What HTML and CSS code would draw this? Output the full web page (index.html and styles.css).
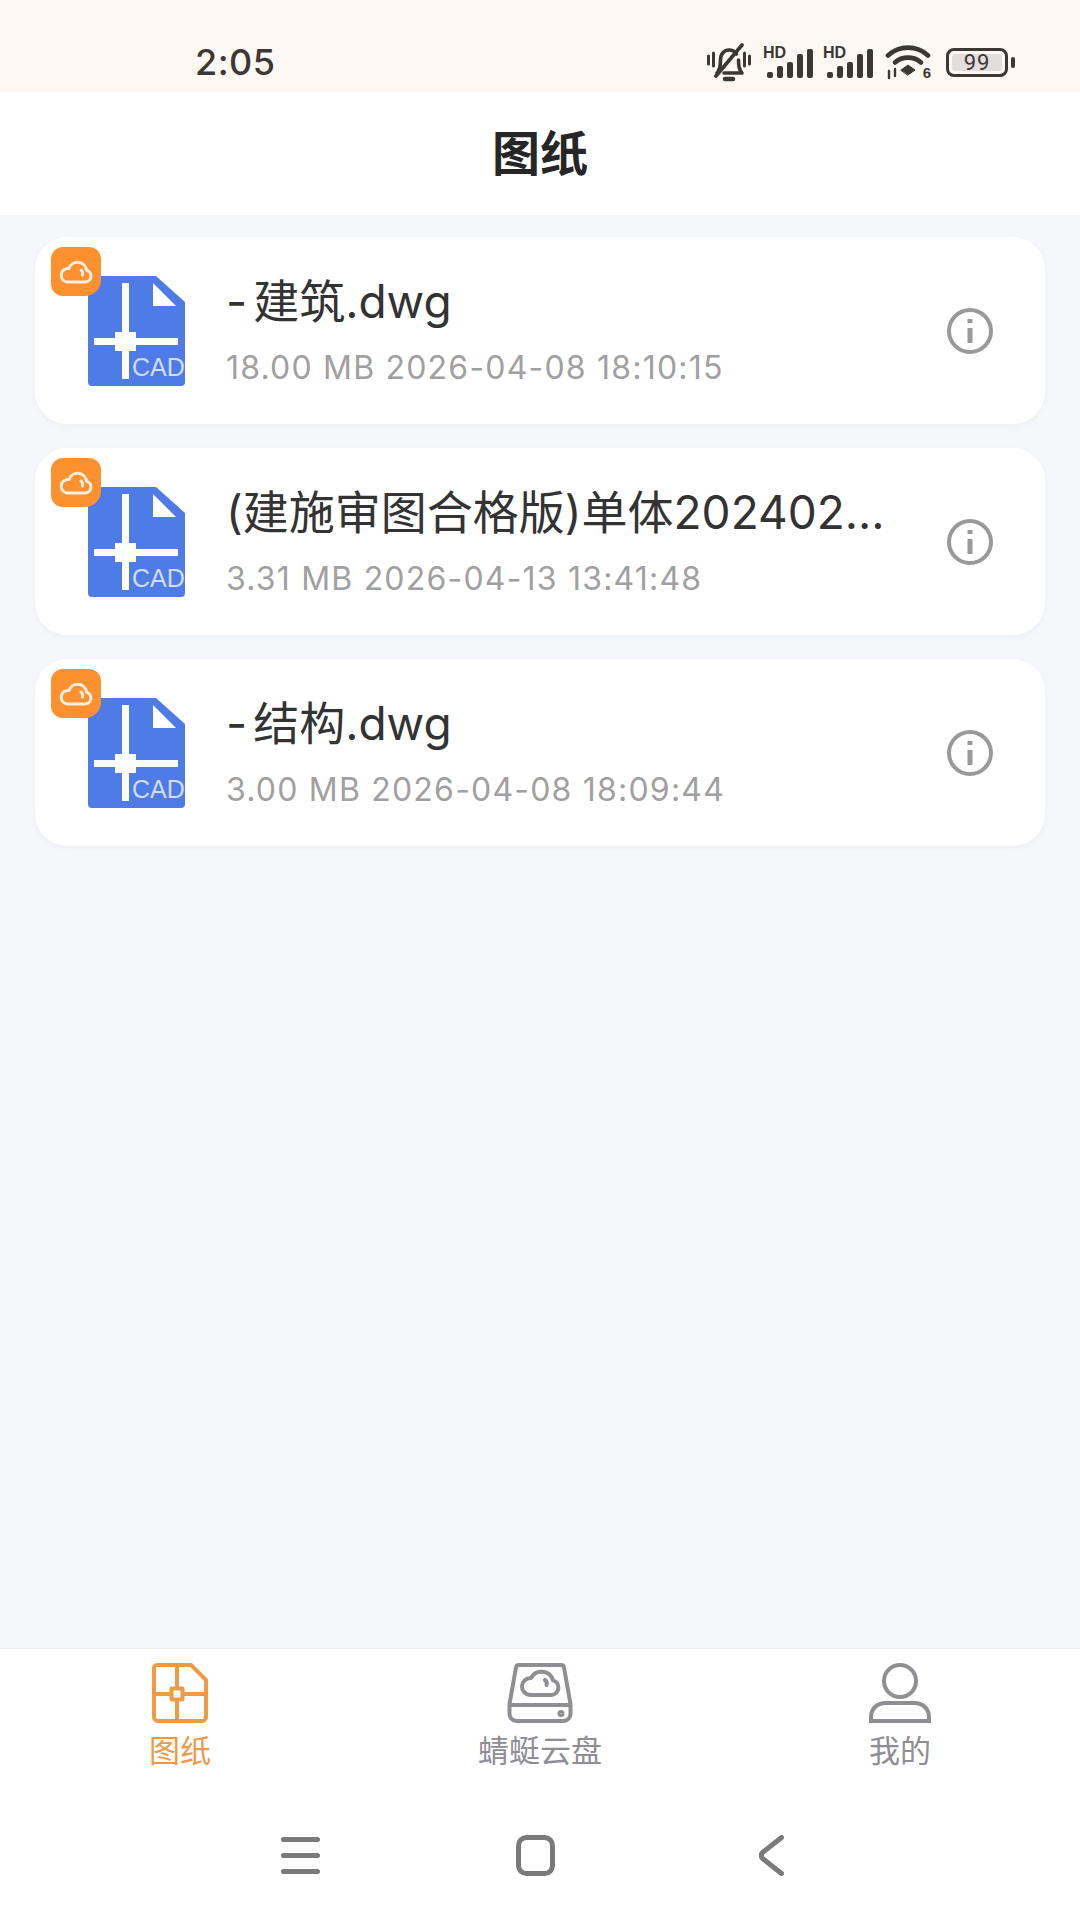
FILE: index.html
```html
<!DOCTYPE html>
<html lang="zh-CN">
<head>
  <meta charset="UTF-8" />
  <meta name="viewport" content="width=device-width, initial-scale=1.0"/>
  <title>图纸</title>
  <link rel="stylesheet" href="styles.css">
</head>
<body>
  <div class="status-bar">
    <span class="clock">2:05</span>
    <div class="status-icons">
      <svg class="ic-bell" viewBox="0 0 44 39" fill="none" stroke="#3d3733" stroke-width="3.6" stroke-linecap="round" stroke-linejoin="round">
        <path d="M1.5 13v8M6.500 10v13M42.500 13v8M37.500 10v13" stroke-width="3"/>
        <path d="M10 30c3-3 3.500-7 3.500-13 0-6 3.500-10 8.500-10 3.500 0 6 1.500 7.500 4M31.500 17c0 6 .5 10 3.500 13H17"/>
        <path d="M18 36h8" stroke-width="4.5"/>
        <path d="M9 33L35 2"/>
      </svg>
      <div class="signal">
        <span class="hd">HD</span>
        <div class="bars"><i class="b1"></i><i class="b2"></i><i class="b3"></i><i class="b4"></i><i class="b5"></i></div>
      </div>
      <div class="signal">
        <span class="hd">HD</span>
        <div class="bars"><i class="b1"></i><i class="b2"></i><i class="b3"></i><i class="b4"></i><i class="b5"></i></div>
      </div>
      <div class="wifi">
        <svg viewBox="0 0 46 36" fill="none" stroke="#3d3733" stroke-width="4.6" stroke-linecap="round">
          <path d="M3 11.500C14 1 32 1 43 11.500"/>
          <path d="M10 18.500C17 12 29 12 36 18.500"/>
          <path d="M16 26l7-5 7 5-7 5z" fill="#3d3733" stroke-width="1"/>
          <path d="M4 27v7M10 25v7" stroke-width="2.4"/>
        </svg>
        <span class="wifi-six">6</span>
      </div>
      <div class="battery">
        <div class="battery-body"><span class="battery-level">99</span></div>
        <i class="battery-tip"></i>
      </div>
    </div>
  </div>

  <header class="title-bar">图纸</header>

  <main class="file-list">
    <div class="file-card">
      <div class="file-icon">
        <span class="cloud-badge">
          <svg viewBox="0 0 34 24" fill="none" stroke="#fdeedd" stroke-width="3" stroke-linecap="round" stroke-linejoin="round"><path d="M8 22h18a6 6 0 0 0 1.500-11.800A9 9 0 0 0 10 8.500 6.800 6.800 0 0 0 8 22z"/><path d="M22 10c1.500 1 2 2.500 1.500 5"/></svg>
        </span>
        <svg class="cad" viewBox="0 0 97 110">
          <path d="M4 0h64l29 26v80a4 4 0 0 1-4 4H4a4 4 0 0 1-4-4V4a4 4 0 0 1 4-4z" fill="#4f7be6"/>
          <path d="M65 7l23 23H65z" fill="#fff"/>
          <path d="M34 7h7v49h7v6h42v7H48v6h-7v28h-7V75h-7v-6H6v-7h21v-6h7z" fill="#fff"/>
          <text x="44" y="100" class="cad-text">CAD</text>
        </svg>
      </div>
      <div class="file-info">
        <div class="file-name"><span class="dash">-</span>建筑.dwg</div>
        <div class="file-meta">18.00 MB 2026-04-08 18:10:15</div>
      </div>
      <svg class="info-btn" viewBox="0 0 48 48" fill="none" stroke="#999" stroke-width="4"><circle cx="24" cy="24" r="21"/><path d="M24 21v15" stroke-width="5"/><path d="M24 12v4" stroke-width="5"/></svg>
    </div>

    <div class="file-card">
      <div class="file-icon">
        <span class="cloud-badge">
          <svg viewBox="0 0 34 24" fill="none" stroke="#fdeedd" stroke-width="3" stroke-linecap="round" stroke-linejoin="round"><path d="M8 22h18a6 6 0 0 0 1.500-11.800A9 9 0 0 0 10 8.500 6.800 6.800 0 0 0 8 22z"/><path d="M22 10c1.500 1 2 2.500 1.500 5"/></svg>
        </span>
        <svg class="cad" viewBox="0 0 97 110">
          <path d="M4 0h64l29 26v80a4 4 0 0 1-4 4H4a4 4 0 0 1-4-4V4a4 4 0 0 1 4-4z" fill="#4f7be6"/>
          <path d="M65 7l23 23H65z" fill="#fff"/>
          <path d="M34 7h7v49h7v6h42v7H48v6h-7v28h-7V75h-7v-6H6v-7h21v-6h7z" fill="#fff"/>
          <text x="44" y="100" class="cad-text">CAD</text>
        </svg>
      </div>
      <div class="file-info">
        <div class="file-name">(建施审图合格版)单体202402...</div>
        <div class="file-meta">3.31 MB 2026-04-13 13:41:48</div>
      </div>
      <svg class="info-btn" viewBox="0 0 48 48" fill="none" stroke="#999" stroke-width="4"><circle cx="24" cy="24" r="21"/><path d="M24 21v15" stroke-width="5"/><path d="M24 12v4" stroke-width="5"/></svg>
    </div>

    <div class="file-card">
      <div class="file-icon">
        <span class="cloud-badge">
          <svg viewBox="0 0 34 24" fill="none" stroke="#fdeedd" stroke-width="3" stroke-linecap="round" stroke-linejoin="round"><path d="M8 22h18a6 6 0 0 0 1.500-11.800A9 9 0 0 0 10 8.500 6.800 6.800 0 0 0 8 22z"/><path d="M22 10c1.500 1 2 2.500 1.500 5"/></svg>
        </span>
        <svg class="cad" viewBox="0 0 97 110">
          <path d="M4 0h64l29 26v80a4 4 0 0 1-4 4H4a4 4 0 0 1-4-4V4a4 4 0 0 1 4-4z" fill="#4f7be6"/>
          <path d="M65 7l23 23H65z" fill="#fff"/>
          <path d="M34 7h7v49h7v6h42v7H48v6h-7v28h-7V75h-7v-6H6v-7h21v-6h7z" fill="#fff"/>
          <text x="44" y="100" class="cad-text">CAD</text>
        </svg>
      </div>
      <div class="file-info">
        <div class="file-name"><span class="dash">-</span>结构.dwg</div>
        <div class="file-meta">3.00 MB 2026-04-08 18:09:44</div>
      </div>
      <svg class="info-btn" viewBox="0 0 48 48" fill="none" stroke="#999" stroke-width="4"><circle cx="24" cy="24" r="21"/><path d="M24 21v15" stroke-width="5"/><path d="M24 12v4" stroke-width="5"/></svg>
    </div>
  </main>

  <nav class="tab-bar">
    <a class="tab active">
      <svg viewBox="0 0 56 60" fill="none" stroke="#f09a45" stroke-width="4" stroke-linejoin="round">
        <path d="M5 2h34l15 15v37a4 4 0 0 1-4 4H6a4 4 0 0 1-4-4V5a3 3 0 0 1 3-3z"/>
        <path d="M25 2v24M25 36v22M2 31h18M31 31h23"/>
        <rect x="19.500" y="25.500" width="11" height="11"/>
      </svg>
      <span>图纸</span>
    </a>
    <a class="tab">
      <svg viewBox="0 0 66 60" fill="none" stroke="#8e8e93" stroke-width="4" stroke-linejoin="round" stroke-linecap="round">
        <path d="M12 2h42a3 3 0 0 1 3 2.500L63.500 41v10a7 7 0 0 1-7 7h-47a7 7 0 0 1-7-7V41L9 4.500A3 3 0 0 1 12 2z"/>
        <path d="M3 42h60"/>
        <circle cx="54" cy="50.500" r="1.500"/>
        <path d="M23 32h21a7.500 7.500 0 0 0 2-14.700A12 12 0 0 0 24 15a8.500 8.500 0 0 0-1 17z"/>
        <path d="M38 17c1.500 1 2 3 1.500 5"/>
      </svg>
      <span>蜻蜓云盘</span>
    </a>
    <a class="tab">
      <svg viewBox="0 0 62 60" fill="none" stroke="#8e8e93" stroke-width="4">
        <circle cx="31" cy="18" r="16"/>
        <path d="M2 58v-4c0-9 7-14 15-14h28c8 0 15 5 15 14v4z"/>
      </svg>
      <span>我的</span>
    </a>
  </nav>

  <div class="nav-bar">
    <svg class="nav-menu" viewBox="0 0 39 37" fill="none" stroke="#7a7a7a" stroke-width="5" stroke-linecap="round"><path d="M2.500 2.500h34M2.500 18.500h34M2.500 34.500h34"/></svg>
    <svg class="nav-home" viewBox="0 0 39 41" fill="none" stroke="#7a7a7a" stroke-width="5"><rect x="2.500" y="2.500" width="34" height="36" rx="8"/></svg>
    <svg class="nav-back" viewBox="0 0 25 41" fill="none" stroke="#7a7a7a" stroke-width="5" stroke-linecap="round" stroke-linejoin="round"><path d="M22.500 2.500L3.500 17.500q-2.500 3 0 6l19 15"/></svg>
  </div>
</body>
</html>
```

FILE: styles.css
```css
* {
  box-sizing: border-box;
}
body {
  font-family: Inter, "Noto Sans CJK SC", sans-serif;
  background-color: #f5f7fb;
  color: #2b2b2b;
  margin: 0;
  width: 1080px;
  height: 1920px;
  display: flex;
  flex-direction: column;
  overflow: hidden;
}
.status-bar {
  height: 92px;
  flex-shrink: 0;
  background-color: #fef8f4;
  display: flex;
  align-items: center;
  justify-content: space-between;
  padding: 32px 65px 0 195px;
  color: #3d3733;
}
.clock {
  font-size: 36px;
  font-weight: 500;
  letter-spacing: 0.5px;
  line-height: 1;
}
.status-icons {
  display: flex;
  align-items: center;
  gap: 12px;
}
.ic-bell {
  width: 44px;
  height: 39px;
}
.signal {
  position: relative;
  width: 50px;
  height: 32px;
}
.signal + .signal {
  margin-left: -2px;
}
.hd {
  position: absolute;
  left: 0;
  top: -1px;
  font-family: "Liberation Sans", sans-serif;
  font-size: 16px;
  font-weight: 700;
  line-height: 1;
}
.bars {
  position: absolute;
  right: 0;
  bottom: 0;
  display: flex;
  align-items: flex-end;
  gap: 4px;
}
.bars i {
  display: block;
  width: 6px;
  background-color: #3d3733;
  border-radius: 2px;
}
.bars .b1 { height: 6px; }
.bars .b2 { height: 12px; }
.bars .b3 { height: 16px; }
.bars .b4 { height: 24px; }
.bars .b5 { height: 29px; }
.wifi {
  position: relative;
  width: 46px;
  height: 36px;
  margin-right: 3px;
}
.wifi svg {
  width: 46px;
  height: 36px;
  display: block;
}
.wifi-six {
  position: absolute;
  right: 0;
  bottom: 0;
  font-family: "Liberation Sans", sans-serif;
  font-size: 15px;
  font-weight: 700;
  line-height: 1;
}
.battery {
  display: flex;
  align-items: center;
  gap: 3px;
}
.battery-body {
  width: 62px;
  height: 29px;
  border: 3px solid #3d3733;
  border-radius: 8px;
  padding: 3px;
  display: flex;
}
.battery-level {
  flex: 1;
  background-color: #e3dedb;
  border-radius: 3px;
  font-family: Roboto, sans-serif;
  font-size: 22px;
  letter-spacing: 1px;
  line-height: 17px;
  text-align: center;
}
.battery-tip {
  display: block;
  width: 4px;
  height: 11px;
  border-radius: 2px;
  background-color: #3d3733;
}
.title-bar {
  height: 123px;
  flex-shrink: 0;
  background-color: #fff;
  display: flex;
  align-items: center;
  justify-content: center;
  padding-bottom: 7px;
  font-size: 48px;
  font-weight: 700;
  color: #262626;
}
.file-list {
  flex: 1;
  padding: 22px 35px 0 35px;
  display: flex;
  flex-direction: column;
  gap: 24px;
}
.file-card {
  height: 187px;
  background-color: #fff;
  border-radius: 32px;
  display: flex;
  align-items: center;
  padding: 0 51px 0 16px;
  box-shadow: 0 2px 6px rgba(200, 205, 220, 0.18);
}
.file-icon {
  position: relative;
  width: 134px;
  height: 139px;
  flex-shrink: 0;
  display: flex;
  align-items: flex-end;
  justify-content: flex-end;
  align-self: flex-start;
  margin-top: 10px;
}
.cad {
  width: 97px;
  height: 110px;
  display: block;
}
.cad-text {
  font-family: "Liberation Sans", sans-serif;
  font-size: 25px;
  fill: #d0dcf8;
}
.cloud-badge {
  position: absolute;
  left: 0;
  top: 0;
  width: 50px;
  height: 49px;
  border-radius: 12px 12px 16px 12px;
  background-color: #fd9130;
  display: flex;
  align-items: center;
  justify-content: center;
}
.cloud-badge svg {
  width: 34px;
  height: 24px;
}
.file-info {
  flex: 1;
  min-width: 0;
  margin-left: 41px;
}
.file-name {
  font-size: 46px;
  line-height: 60px;
  color: #333;
  white-space: nowrap;
}
.dash {
  letter-spacing: 6px;
}
.file-meta {
  font-size: 32px;
  letter-spacing: 1.2px;
  line-height: 44px;
  margin-top: 15px;
  color: #a0a0a0;
}
.info-btn {
  width: 48px;
  height: 48px;
  flex-shrink: 0;
}
.tab-bar {
  height: 142px;
  flex-shrink: 0;
  background-color: #fff;
  border-top: 1px solid #e9ebef;
  display: grid;
  grid-template-columns: repeat(3, 1fr);
}
.tab {
  display: flex;
  flex-direction: column;
  align-items: center;
  padding-top: 14px;
  font-size: 31px;
  color: #8e8e93;
  line-height: 36px;
}
.tab svg {
  height: 60px;
  margin-bottom: 10px;
}
.tab.active {
  color: #ec9a4a;
}
.nav-bar {
  height: 130px;
  flex-shrink: 0;
  background-color: #fff;
  display: flex;
  align-items: center;
  justify-content: center;
  gap: 200px;
  padding-right: 14px;
}
.nav-menu {
  width: 39px;
  height: 37px;
  margin-left: -2px;
}
.nav-home {
  width: 39px;
  height: 41px;
  margin-left: -4px;
  margin-right: 4px;
}
.nav-back {
  width: 25px;
  height: 41px;
}
```
